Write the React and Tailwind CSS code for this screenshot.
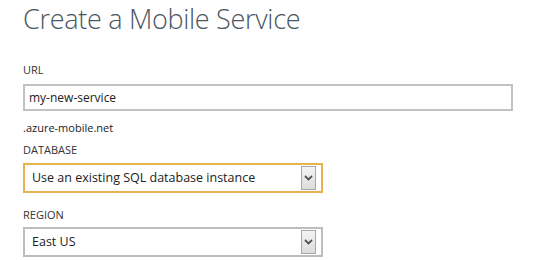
import React from "react";

function Chevron() {
  return (
    <svg width="9" height="6" viewBox="0 0 9 6">
      <path d="M1 1 L4.5 4.5 L8 1" fill="none" stroke="#555" strokeWidth="1.8" />
    </svg>
  );
}

function Select({ value, focused }) {
  return (
    <div
      className={`flex h-[30px] w-[300px] items-center justify-between bg-white pl-[7px] pr-[5px] ${
        focused ? "border-2 border-[#e8b24c]" : "border-2 border-[#bdbdbd]"
      }`}
    >
      <span className="text-[12.5px] text-[#222]">{value}</span>
      <div className="flex h-[24px] w-[15px] items-center justify-center border border-[#a8a8a8] bg-gradient-to-b from-[#f4f4f4] to-[#dcdcdc]">
        <Chevron />
      </div>
    </div>
  );
}

function Label({ children }) {
  return <div className="text-[11px] leading-[12px] text-[#333]">{children}</div>;
}

export default function App() {
  return (
    <div className="h-[260px] w-[560px] overflow-hidden bg-white pl-[23px] font-['Open_Sans','Liberation_Sans',sans-serif]">
      <h1 className="pt-[1px] text-[27px] font-light leading-[36px] tracking-[-0.3px] text-[#4a5661]">
        Create a Mobile Service
      </h1>

      <div className="mt-[27px]">
        <Label>URL</Label>
      </div>
      <div className="mt-[8px] flex h-[27px] w-[490px] items-center border-2 border-[#c2c2c2] bg-white pl-[4px]">
        <span className="text-[12px] text-[#222]">my-new-service</span>
      </div>
      <div className="mt-[10px] text-[11px] leading-[14px] text-[#222]">.azure-mobile.net</div>

      <div className="mt-[9px]">
        <Label>DATABASE</Label>
      </div>
      <div className="mt-[7px]">
        <Select value="Use an existing SQL database instance" focused />
      </div>

      <div className="mt-[16px]">
        <Label>REGION</Label>
      </div>
      <div className="mt-[6px]">
        <Select value="East US" />
      </div>
    </div>
  );
}
